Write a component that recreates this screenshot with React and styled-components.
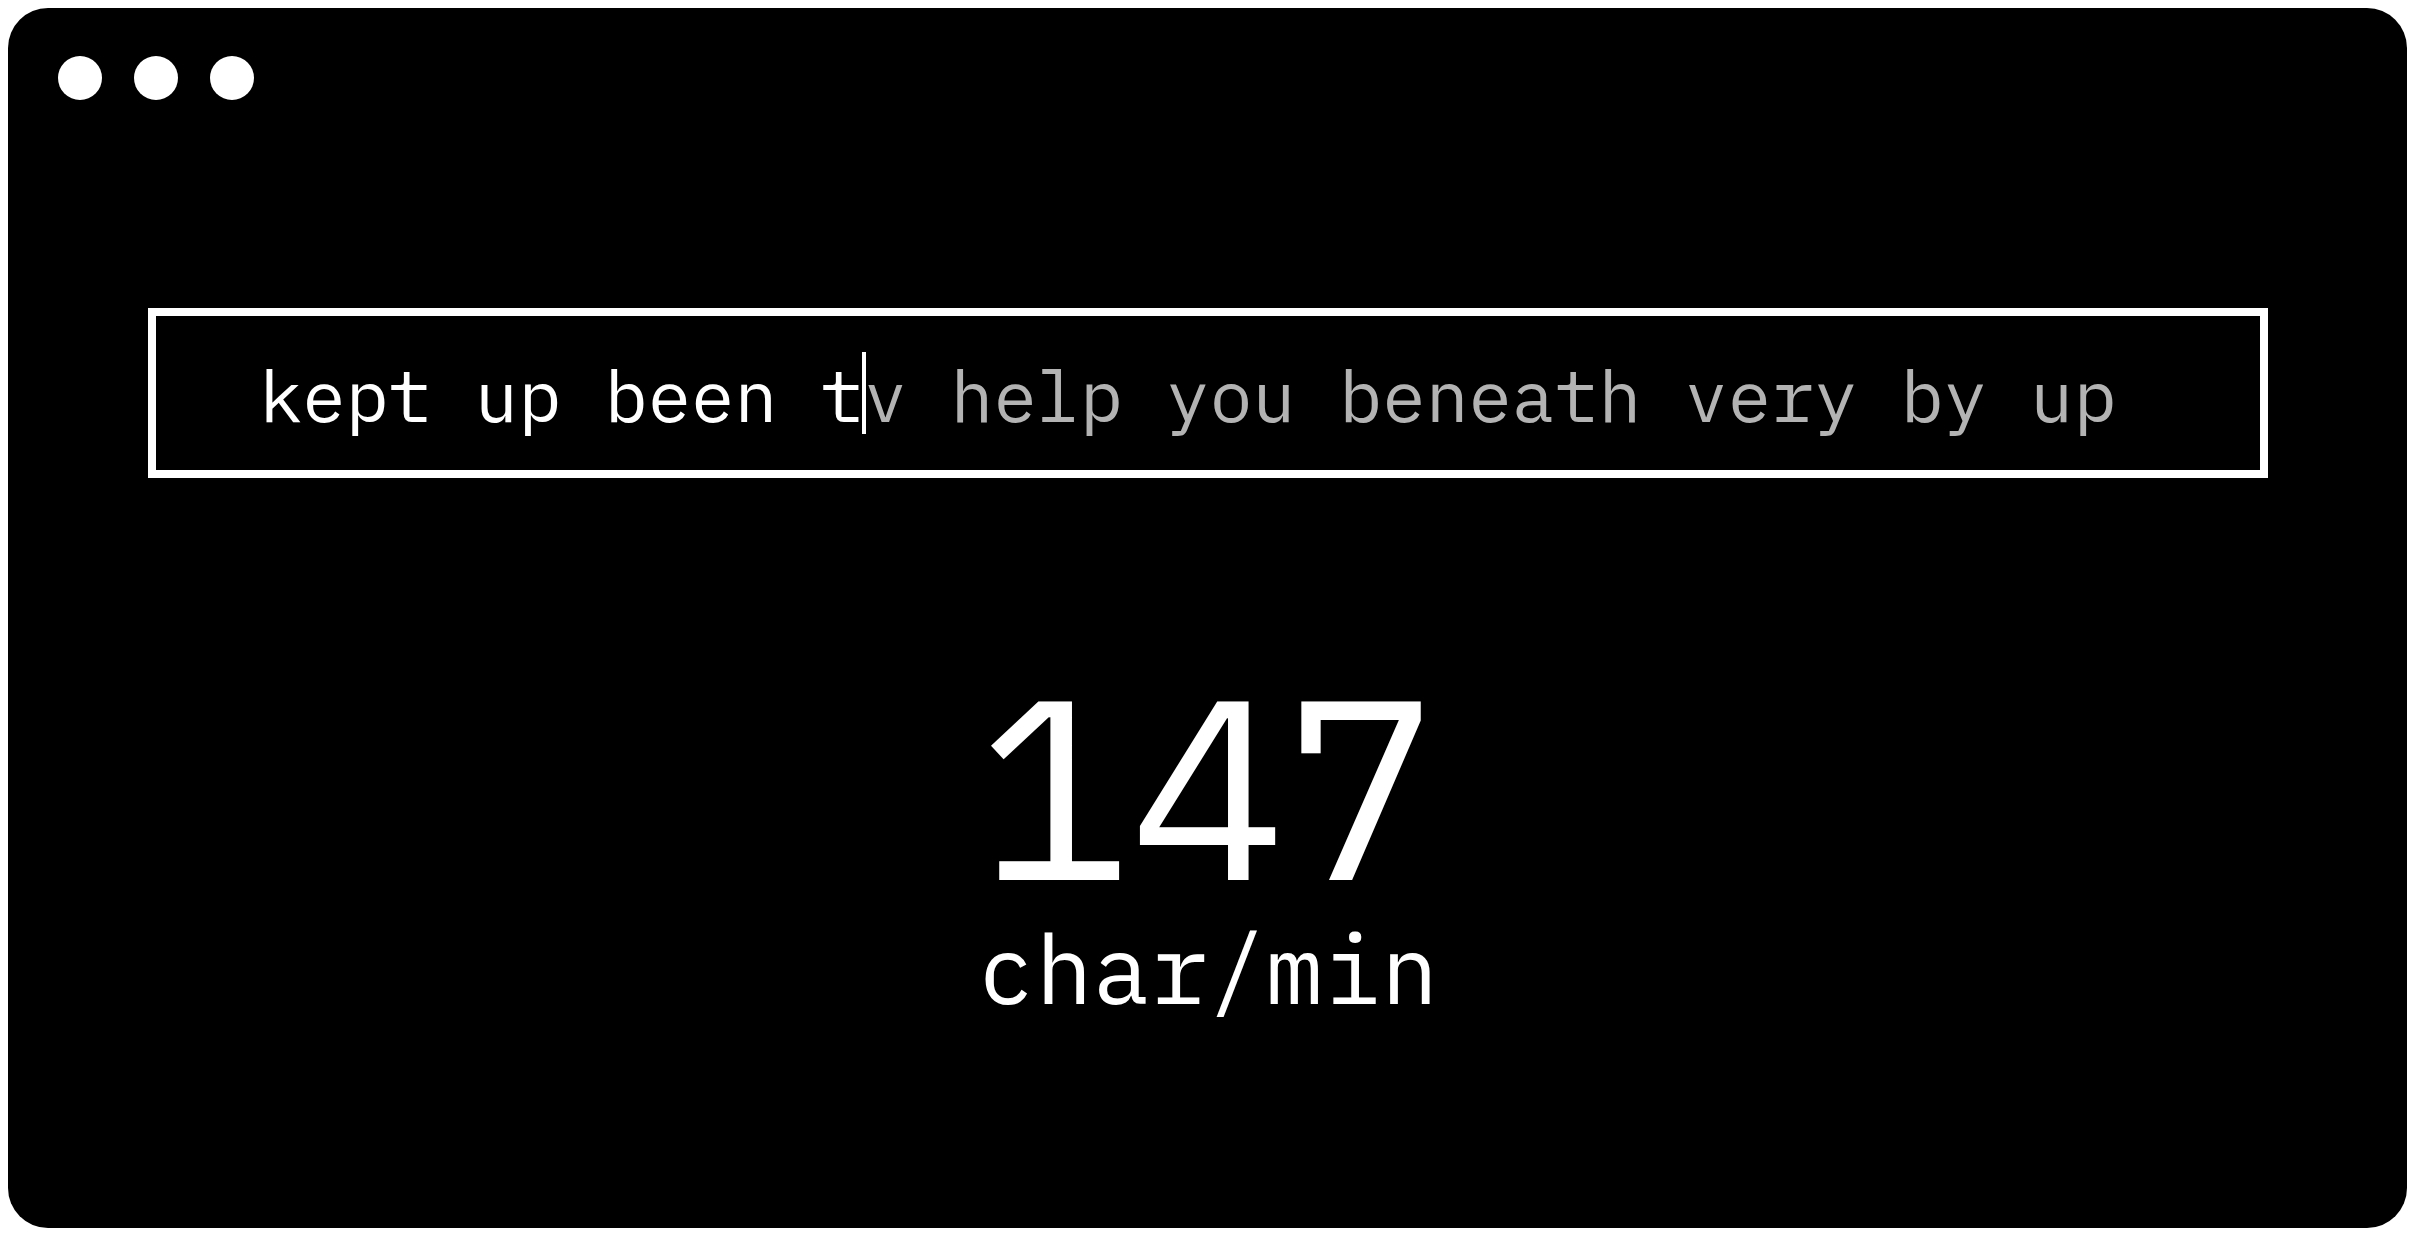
import React, { useState } from "react";
import styled, { createGlobalStyle } from "styled-components";

const GlobalStyle = createGlobalStyle`
  *, *::before, *::after { box-sizing: border-box; }
  body { margin: 0; background: #fff; }
`;

const Page = styled.div`
  display: flex;
  min-height: 100vh;
  padding: 8px;
`;

const Window = styled.main`
  flex: 1;
  display: flex;
  flex-direction: column;
  border-radius: 40px;
  background: #000;
  color: #fff;
  font-family: "IBM Plex Mono", "Liberation Mono", monospace;
`;

const TitleBar = styled.header`
  display: flex;
  gap: 32px;
  padding: 48px 50px;
`;

const Dot = styled.span`
  width: 44px;
  height: 44px;
  border-radius: 50%;
  background: #fff;
`;

const Content = styled.div`
  display: flex;
  flex-direction: column;
  gap: 178px;
  padding: 160px 139px 0 140px;
`;

const TypingBox = styled.label`
  position: relative;
  display: flex;
  border: 8px solid #fff;
  padding: 32px 103px 28px;
  font-size: 72px;
  line-height: 94px;
  white-space: pre;
  overflow: hidden;
`;

const Typed = styled.input`
  flex: none;
  height: 94px;
  padding: 0;
  border: 0;
  outline: 0;
  background: transparent;
  color: inherit;
  font: inherit;
  caret-color: transparent;
`;

const CaretAnchor = styled.span`
  position: relative;
  width: 0;
`;

const Caret = styled.span`
  position: absolute;
  top: 4px;
  left: -2px;
  width: 4px;
  height: 82px;
  background: #fff;
`;

const Upcoming = styled.span`
  color: #b3b3b3;
`;

const Score = styled.section`
  display: flex;
  flex-direction: column;
  align-items: center;
`;

const ScoreValue = styled.strong`
  font-size: 256px;
  font-weight: 400;
  line-height: 256px;
`;

const ScoreUnit = styled.span`
  font-size: 96px;
  line-height: 112px;
`;

const TEXT = "kept up been tv help you beneath very by up";

export default function App() {
  const [typed, setTyped] = useState("kept up been t");

  const handleChange = (event) => {
    if (TEXT.startsWith(event.target.value)) setTyped(event.target.value);
  };

  return (
    <Page>
      <GlobalStyle />
      <Window>
        <TitleBar>
          <Dot />
          <Dot />
          <Dot />
        </TitleBar>
        <Content>
          <TypingBox>
            <Typed
              type="text"
              aria-label={TEXT}
              spellCheck={false}
              autoComplete="off"
              value={typed}
              onChange={handleChange}
              style={{ width: `${typed.length}ch` }}
            />
            <CaretAnchor>
              <Caret />
            </CaretAnchor>
            <Upcoming>{TEXT.slice(typed.length)}</Upcoming>
          </TypingBox>
          <Score>
            <ScoreValue>147</ScoreValue>
            <ScoreUnit>char/min</ScoreUnit>
          </Score>
        </Content>
      </Window>
    </Page>
  );
}
